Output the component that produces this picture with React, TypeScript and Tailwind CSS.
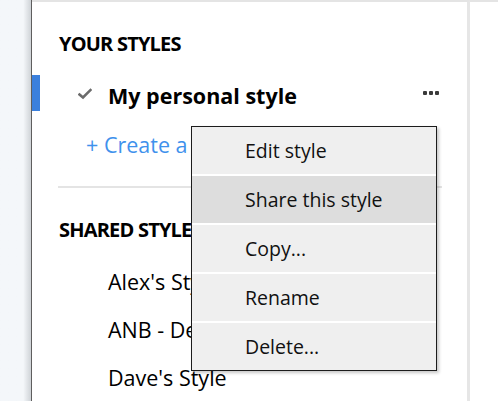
/* ─── Data ─── */
const SHARED = ["Alex's Style", 'ANB - Default', "Dave's Style"]
const MENU = ['Edit style', 'Share this style', 'Copy...', 'Rename', 'Delete...']

function CheckIcon() {
  return (
    <svg width="14" height="12" viewBox="0 0 14 12" fill="none" stroke="#6b6b6b" strokeWidth="2.6" strokeLinecap="square">
      <polyline points="1.5,6.5 5,9.5 12.5,2" />
    </svg>
  )
}

function Dots() {
  return (
    <div className="flex items-center gap-[2px]">
      <span className="h-[4px] w-[4px] rounded-[1px] bg-[#3a3a3a]" />
      <span className="h-[4px] w-[4px] rounded-[1px] bg-[#3a3a3a]" />
      <span className="h-[4px] w-[4px] rounded-[1px] bg-[#3a3a3a]" />
    </div>
  )
}

export default function App() {
  return (
    <div
      className="flex h-[401px] w-[498px] overflow-hidden bg-white text-black"
      style={{ fontFamily: '"Open Sans", "Noto Sans", sans-serif' }}
    >
      {/* left gutter */}
      <div className="w-[32px] shrink-0 border-r border-[#5e5e5e] bg-gradient-to-r from-[#f4f7fa] from-75% to-[#cfd3d7]" />

      {/* styles panel */}
      <div className="relative w-[438px] shrink-0 border-t-2 border-r-[3px] border-t-[#e4e4e4] border-r-[#e6e6e6]">
        <div className="mt-[30px] pl-[27px] text-[20px] font-bold leading-[24px] tracking-[-0.8px]">YOUR STYLES</div>

        <div className="mt-[19px] flex h-[36px] items-center">
          <div className="h-full w-[8px] bg-[#3b80dd]" />
          <div className="ml-[38px] mt-[2px]">
            <CheckIcon />
          </div>
          <div className="ml-[16px] pt-[5px] text-[21.5px] font-bold leading-[28px]">My personal style</div>
          <div className="ml-auto mr-[28px]">
            <Dots />
          </div>
        </div>

        <div className="mt-[20px] pl-[54px] text-[21.5px] leading-[28px] text-[#3f91ec]">+ Create a new style</div>

        <div className="ml-[26px] mr-[25px] mt-[27px] h-[2px] bg-[#e4e4e4]" />

        <div className="mt-[30px] pl-[27px] text-[20px] font-bold leading-[24px] tracking-[-0.8px]">SHARED STYLES</div>

        <div className="mt-[16px] flex flex-col">
          {SHARED.map((s) => (
            <div key={s} className="h-[48px] pl-[76px] text-[21.5px] leading-[48px]">
              {s}
            </div>
          ))}
        </div>

        {/* context menu */}
        <div className="absolute left-[159px] top-[124px] flex w-[246px] flex-col gap-[2px] border border-[#1c1c1c] bg-white shadow-[2px_2px_3px_rgba(0,0,0,0.22)]">
          {MENU.map((m, i) => (
            <div
              key={m}
              className={
                i === 1
                  ? 'h-[47px] bg-[#dddddd] pl-[53px] text-[19.5px] leading-[47px] text-[#111]'
                  : 'h-[47px] bg-[#efefef] pl-[53px] text-[19.5px] leading-[47px] text-[#111]'
              }
            >
              {m}
            </div>
          ))}
        </div>
      </div>

      {/* right area */}
      <div className="flex-1 border-t-2 border-[#e4e4e4]" />
    </div>
  )
}
